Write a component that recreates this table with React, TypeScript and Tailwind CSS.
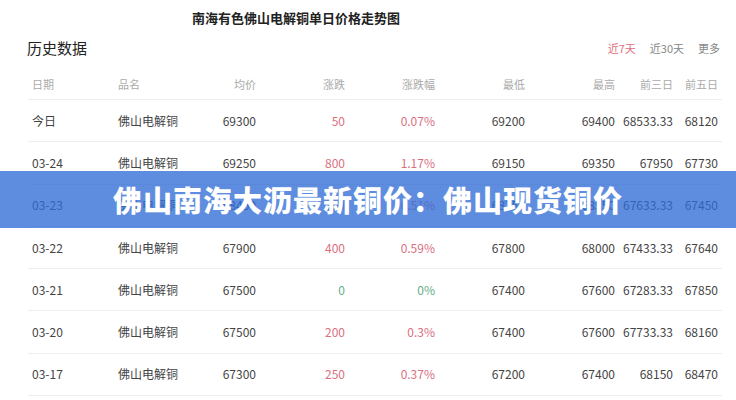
const rows = [
  { d: '今日', avg: '69300', chg: '50', pct: '0.07%', lo: '69200', hi: '69400', p3: '68533.33', p5: '68120' },
  { d: '03-24', avg: '69250', chg: '800', pct: '1.17%', lo: '69150', hi: '69350', p3: '67950', p5: '67730' },
  { d: '03-23', avg: '68450', chg: '350', pct: '0.51%', lo: '68350', hi: '68550', p3: '67633.33', p5: '67450' },
  { d: '03-22', avg: '67900', chg: '400', pct: '0.59%', lo: '67800', hi: '68000', p3: '67433.33', p5: '67640' },
  { d: '03-21', avg: '67500', chg: '0', pct: '0%', lo: '67400', hi: '67600', p3: '67283.33', p5: '67850' },
  { d: '03-20', avg: '67500', chg: '200', pct: '0.3%', lo: '67400', hi: '67600', p3: '67733.33', p5: '68160' },
  { d: '03-17', avg: '67300', chg: '250', pct: '0.37%', lo: '67200', hi: '67400', p3: '68150', p5: '68470' },
]

const cols = 'grid grid-cols-[86px_86px_56px_89px_90px_90px_90px_58px_45px] pr-1'

export default function App() {
  return (
    <div className="relative w-[736px] h-[400px] overflow-hidden bg-white font-['Noto_Sans_CJK_SC',sans-serif] text-[#444]">
      <div className="h-[36px] pl-[192px] pt-[8px] text-[13px] font-bold text-[#222] leading-[20px]">
        南海有色佛山电解铜单日价格走势图
      </div>

      <div className="flex items-center justify-between pl-[27px] pr-[16px] h-[24px]">
        <h1 className="text-[15px] text-[#222]">历史数据</h1>
        <div className="flex gap-[14px] text-[11px] text-[#888]">
          <span className="text-[#e0707e]">近7天</span>
          <span>近30天</span>
          <span>更多</span>
        </div>
      </div>

      <div className="ml-[28px] w-[694px] mt-[10px]">
        <div className={`${cols} h-[30px] items-center text-[11px] text-[#aaa] border-b border-[#eee]`}>
          <span className="pl-1">日期</span>
          <span className="pl-1">品名</span>
          <span className="text-right">均价</span>
          <span className="text-right">涨跌</span>
          <span className="text-right">涨跌幅</span>
          <span className="text-right">最低</span>
          <span className="text-right">最高</span>
          <span className="text-right">前三日</span>
          <span className="text-right">前五日</span>
        </div>
        {rows.map((r) => {
          const up = r.chg !== '0'
          const c = up ? 'text-[#d9707f]' : 'text-[#5fae86]'
          return (
            <div key={r.d} className={`${cols} h-[42.3px] items-center text-[12px] border-b border-[#eee]`}>
              <span className="pl-1">{r.d}</span>
              <span className="pl-1">佛山电解铜</span>
              <span className="text-right">{r.avg}</span>
              <span className={`text-right ${c}`}>{r.chg}</span>
              <span className={`text-right ${c}`}>{r.pct}</span>
              <span className="text-right">{r.lo}</span>
              <span className="text-right">{r.hi}</span>
              <span className="text-right">{r.p3}</span>
              <span className="text-right">{r.p5}</span>
            </div>
          )
        })}
      </div>

      {/* overlay title band */}
      <div className="absolute left-0 right-0 top-[171px] h-[57px] bg-[#2d6bd7]/[0.77] flex items-center justify-center">
        <span className="text-white text-[29px] font-black tracking-[1px] leading-none">
          佛山南海大沥最新铜价：佛山现货铜价
        </span>
      </div>
    </div>
  )
}
